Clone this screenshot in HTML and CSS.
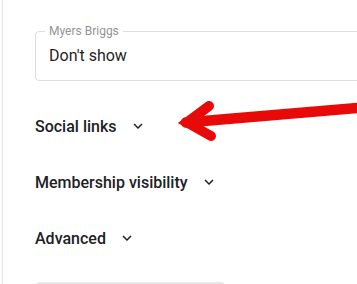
FILE: index.html
```html
<!DOCTYPE html>
<html>
<head>
<meta charset="utf-8">
<link rel="stylesheet" href="styles.css">
</head>
<body>
<main class="panel">
  <fieldset class="field">
    <legend class="field-label">Myers Briggs</legend>
    <div class="field-value">Don't show</div>
  </fieldset>
  <div class="sections">
    <div class="section-head"><span>Social links</span>
      <svg class="chev" viewBox="0 0 24 24"><path d="M16.59 8.59L12 13.17 7.41 8.59 6 10l6 6 6-6z"/></svg>
    </div>
    <div class="section-head"><span>Membership visibility</span>
      <svg class="chev" viewBox="0 0 24 24"><path d="M16.59 8.59L12 13.17 7.41 8.59 6 10l6 6 6-6z"/></svg>
    </div>
    <div class="section-head"><span>Advanced</span>
      <svg class="chev" viewBox="0 0 24 24"><path d="M16.59 8.59L12 13.17 7.41 8.59 6 10l6 6 6-6z"/></svg>
    </div>
    <div class="save-btn"></div>
  </div>
</main>
<svg class="annot" width="357" height="284" viewBox="0 0 357 284">
  <path d="M362 107.5 L186 122.5" fill="none" stroke="#e80909" stroke-width="10.5" stroke-linecap="round"/>
  <path d="M209 106 L187 122.5 L211 136" fill="none" stroke="#e80909" stroke-width="10" stroke-linecap="round" stroke-linejoin="miter"/>
</svg>
</body>
</html>
```
FILE: styles.css
```css
html, body {
  margin: 0;
  padding: 0;
  overflow: hidden;
  width: 357px;
  height: 284px;
  background: #ffffff;
  font-family: Roboto, "Liberation Sans", sans-serif;
  color: #202124;
}
.panel {
  margin-left: 2px;
  border-left: 1px solid #e6e6e6;
  padding: 24px 0 0 32px;
  height: 284px;
  box-sizing: border-box;
  overflow: hidden;
}
.field {
  margin: 0 -40px 0 0;
  border: 1px solid #dedede;
  border-radius: 4px;
  padding: 6px 0 12px 9px;
}
.field-label {
  font-size: 12px;
  line-height: 14px;
  color: #949494;
  padding: 0 4px;
}
.field-value {
  font-size: 16px;
  line-height: 24px;
  padding-left: 4px;
  color: #1f1f1f;
}
.sections {
  display: flex;
  flex-direction: column;
  gap: 32px;
  padding-top: 33px;
}
.section-head {
  display: flex;
  align-items: center;
  gap: 12px;
  height: 24px;
  font-size: 16px;
  font-weight: 500;
  color: #202124;
}
.chev {
  width: 18px;
  height: 18px;
  fill: #202124;
}
.save-btn {
  width: 189px;
  height: 36px;
  margin-left: 1px;
  border-radius: 4px;
  background: #e8e8e8;
}
.annot {
  position: absolute;
  left: 0;
  top: 0;
  pointer-events: none;
}
```
